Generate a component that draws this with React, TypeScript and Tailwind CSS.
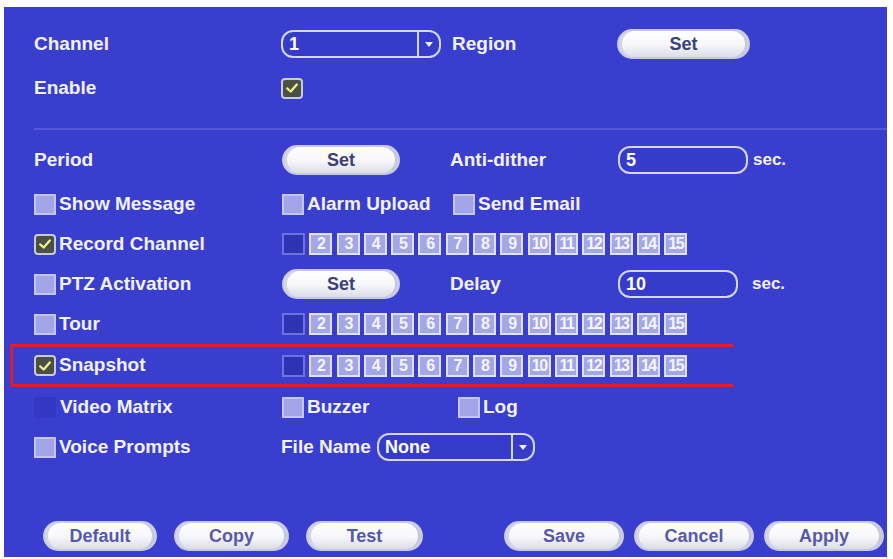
import type { ReactNode } from "react";

const channels = ["", "2", "3", "4", "5", "6", "7", "8", "9", "10", "11", "12", "13", "14", "15"];

function Check({ checked = false, hidden = false }: { checked?: boolean; hidden?: boolean }) {
  if (hidden) return <span className="inline-block w-[22px] h-[21px] bg-[#3337c2] rounded-[2px] shrink-0" />;
  if (checked)
    return (
      <span className="inline-flex items-center justify-center w-[22px] h-[21px] rounded-[4px] border-2 border-[#c9cbd6] bg-[#4b5044] shrink-0">
        <svg viewBox="0 0 16 16" className="w-[14px] h-[14px]">
          <path d="M2.5 8.5 L6.5 12 L13.5 4" fill="none" stroke="#eef38a" strokeWidth="2.6" strokeLinecap="round" strokeLinejoin="round" />
        </svg>
      </span>
    );
  return <span className="inline-block w-[22px] h-[21px] border-2 border-[#c3c6f0] bg-[#a2a6e8] shrink-0" />;
}

function CheckLabel({ checked, hidden, children }: { checked?: boolean; hidden?: boolean; children: ReactNode }) {
  return (
    <span className="flex items-center gap-[3px]">
      <Check checked={checked} hidden={hidden} />
      <span className={hidden ? "ml-[1px]" : ""}>{children}</span>
    </span>
  );
}

function PillButton({ label, w, dim = false }: { label: string; w: string; dim?: boolean }) {
  return (
    <button
      className={`${w} h-[30px] rounded-full border-2 border-[#c7c9e6] bg-gradient-to-b from-white via-[#f8f8fc] to-[#dcdde8] shadow-[inset_3px_0_0_#d4d5e4,inset_-3px_0_0_#c6c7d8] text-[18px] font-bold ${dim ? "text-[#5559a8]" : "text-[#3d3f78]"}`}
    >
      {label}
    </button>
  );
}

function Field({ value, w, dropdown = false }: { value: string; w: string; dropdown?: boolean }) {
  return (
    <span className={`${w} h-[28px] flex items-center rounded-[12px] border-2 border-[#d4d6fb] bg-[#373bca]`}>
      <span className="flex-1 pl-[6px] text-[18px] font-bold text-white leading-none">{value}</span>
      {dropdown && (
        <span className="w-[22px] h-full flex items-center justify-center border-l-2 border-[#d4d6fb]">
          <svg viewBox="0 0 10 6" className="w-[8px] h-[5px]">
            <path d="M0 0 H10 L5 6 Z" fill="#f2f3ff" />
          </svg>
        </span>
      )}
    </span>
  );
}

function ChannelStrip() {
  return (
    <div className="flex gap-[4.3px]">
      {channels.map((c, i) => (
        <span
          key={i}
          className={`w-[23px] h-[22px] flex items-center justify-center border-2 text-[16px] font-bold leading-none tracking-[-1.5px] ${
            i === 0 ? "bg-[#2e32b4] border-[#6d72e0]" : "bg-[#a3a7e6] border-[#dfe1fb] text-[#f4f5ff]"
          }`}
        >
          {c}
        </span>
      ))}
    </div>
  );
}

function Row({ label, children, className = "" }: { label: ReactNode; children?: ReactNode; className?: string }) {
  return (
    <div className={`h-[40px] flex items-center ${className}`}>
      <div className="w-[247px] shrink-0">{label}</div>
      {children}
    </div>
  );
}

export default function App() {
  return (
    <div className="w-[893px] h-[559px] bg-white pl-[4px] pt-[7px] font-['Liberation_Sans',Arial,sans-serif] text-[19px] font-bold text-[#f1f2ff]">
      <div className="w-[883px] h-[550px] bg-[#3a3ecf] flex flex-col pl-[30px] pt-[17px] pb-[6px]">
        <Row label="Channel">
          <div className="w-[171px]">
            <Field value="1" w="w-[160px]" dropdown />
          </div>
          <div className="w-[165px]">Region</div>
          <PillButton label="Set" w="w-[133px]" />
        </Row>
        <Row label="Enable" className="mt-[4px]">
          <Check checked />
        </Row>

        <div className="mt-[20px] h-[2px] bg-[#5358de]" />

        <Row label="Period" className="mt-[10px]">
          <div className="w-[169px] pl-[1px]">
            <PillButton label="Set" w="w-[118px]" />
          </div>
          <div className="w-[168px]">Anti-dither</div>
          <Field value="5" w="w-[130px]" />
          <span className="ml-[5px] text-[17px]">sec.</span>
        </Row>
        <Row label={<CheckLabel>Show Message</CheckLabel>} className="mt-[4px]">
          <div className="w-[172px] pl-[1px]">
            <CheckLabel>Alarm Upload</CheckLabel>
          </div>
          <CheckLabel>Send Email</CheckLabel>
        </Row>
        <Row label={<CheckLabel checked>Record Channel</CheckLabel>}>
          <div className="pl-[1px]">
            <ChannelStrip />
          </div>
        </Row>
        <Row label={<CheckLabel>PTZ Activation</CheckLabel>}>
          <div className="w-[169px] pl-[1px]">
            <PillButton label="Set" w="w-[118px]" />
          </div>
          <div className="w-[168px]">Delay</div>
          <Field value="10" w="w-[120px]" />
          <span className="ml-[14px] text-[17px]">sec.</span>
        </Row>
        <Row label={<CheckLabel>Tour</CheckLabel>}>
          <div className="pl-[1px]">
            <ChannelStrip />
          </div>
        </Row>
        <div className="relative">
          <span className="absolute left-[-24px] top-[0px] w-[723px] h-[43px] border-[3px] border-r-0 border-[#d81e3a] pointer-events-none" />
          <Row label={<CheckLabel checked>Snapshot</CheckLabel>} className="h-[43px]">
            <div className="pl-[1px]">
              <ChannelStrip />
            </div>
          </Row>
        </div>
        <Row label={<CheckLabel hidden>Video Matrix</CheckLabel>}>
          <div className="w-[177px] pl-[1px]">
            <CheckLabel>Buzzer</CheckLabel>
          </div>
          <CheckLabel>Log</CheckLabel>
        </Row>
        <Row label={<CheckLabel>Voice Prompts</CheckLabel>}>
          <span className="w-[96px]">File Name</span>
          <Field value="None" w="w-[158px]" dropdown />
        </Row>

        <div className="mt-auto flex items-center pl-[9px]">
          <div className="flex gap-[17px]">
            <PillButton label="Default" w="w-[114px]" dim />
            <PillButton label="Copy" w="w-[115px]" dim />
            <PillButton label="Test" w="w-[117px]" dim />
          </div>
          <div className="ml-[81px] flex gap-[10px]">
            <PillButton label="Save" w="w-[120px]" dim />
            <PillButton label="Cancel" w="w-[120px]" dim />
            <PillButton label="Apply" w="w-[120px]" dim />
          </div>
        </div>
      </div>
    </div>
  );
}
